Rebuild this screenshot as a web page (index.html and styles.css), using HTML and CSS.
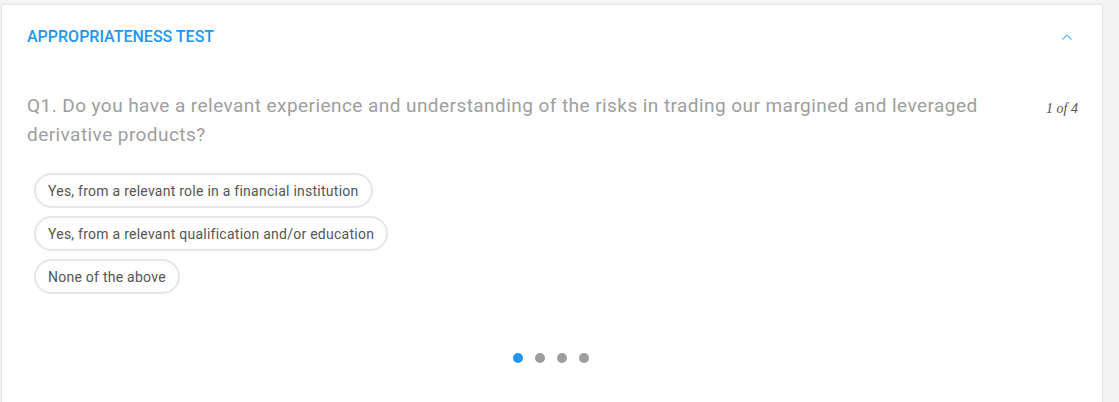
FILE: index.html
```html
<!DOCTYPE html>
<html>
<head>
<meta charset="utf-8">
<link rel="stylesheet" href="styles.css">
</head>
<body>
<div class="card">
  <div class="header">
    <span class="title">APPROPRIATENESS TEST</span>
    <svg class="chev" width="12" height="8" viewBox="0 0 12 8"><path d="M1.5 6.5 L6 2 L10.5 6.5" fill="none" stroke="#64b5f6" stroke-width="1.2"/></svg>
  </div>
  <div class="body">
    <div class="qrow">
      <div class="question">Q1. Do you have a relevant experience and understanding of the risks in trading our margined and leveraged derivative products?</div>
      <div class="count">1 of 4</div>
    </div>
    <div class="options">
      <button class="opt">Yes, from a relevant role in a financial institution</button>
      <button class="opt">Yes, from a relevant qualification and/or education</button>
      <button class="opt">None of the above</button>
    </div>
    <div class="dots">
      <span class="dot active"></span>
      <span class="dot"></span>
      <span class="dot"></span>
      <span class="dot"></span>
    </div>
  </div>
</div>
</body>
</html>
```
FILE: styles.css
```css
html, body {
  margin: 0;
  padding: 0;
  background: #f4f4f4;
  font-family: Roboto, "Liberation Sans", sans-serif;
}
body {
  padding: 5px 0 0 2px;
  height: 402px;
  box-sizing: border-box;
  overflow: hidden;
}
.card {
  width: 1100px;
  height: 420px;
  background: #fff;
  border-radius: 3px;
  box-shadow: 0 0 2px rgba(0,0,0,0.15), 0 1px 3px rgba(0,0,0,0.06);
}
.header {
  height: 63px;
  display: flex;
  align-items: center;
  justify-content: space-between;
  padding: 0 29px 0 25px;
}
.title {
  color: #2196f3;
  font-size: 16px;
  font-weight: 500;
  margin-top: -1px;
}
.chev {
  display: block;
}
.body {
  padding: 23px 24px 0 25px;
}
.qrow {
  display: flex;
  justify-content: space-between;
  align-items: flex-start;
}
.question {
  color: #9e9e9e;
  font-size: 19px;
  letter-spacing: 0.44px;
  line-height: 29px;
  width: 990px;
}
.count {
  font-family: "Liberation Serif", serif;
  font-style: italic;
  font-size: 14px;
  color: #555;
  padding-top: 10px;
}
.options {
  display: flex;
  flex-direction: column;
  align-items: flex-start;
  gap: 8px;
  margin-top: 24px;
  padding-left: 7px;
}
.opt {
  font-family: Roboto, "Liberation Sans", sans-serif;
  font-size: 14px;
  letter-spacing: 0.25px;
  color: #555;
  background: #fff;
  border: 2px solid #e6e6e6;
  border-radius: 18px;
  height: 35px;
  padding: 0 12px;
  cursor: pointer;
}
.dots {
  display: flex;
  justify-content: center;
  gap: 12.3px;
  margin-top: 59px;
  padding-right: 3px;
}
.dot {
  width: 10px;
  height: 10px;
  border-radius: 50%;
  background: #9e9e9e;
}
.dot.active {
  background: #2196f3;
}
```
